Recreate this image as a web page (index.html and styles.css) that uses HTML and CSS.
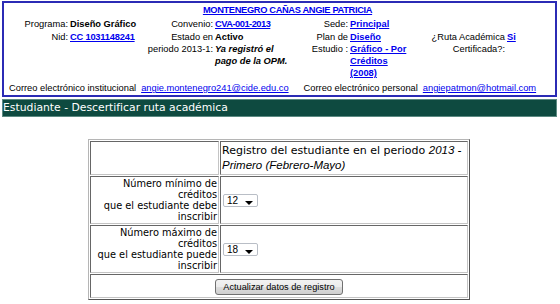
FILE: index.html
```html
<!DOCTYPE html>
<html lang="es">
<head>
<meta charset="utf-8">
<title>Estudiante - Descertificar ruta académica</title>
<link rel="stylesheet" href="styles.css">
</head>
<body>
<div class="page">
  <div class="info">
    <div class="info-grid">
      <div class="name"><a href="#" class="tight">MONTENEGRO CAÑAS ANGIE PATRICIA</a></div>

      <div class="lbl">Programa:</div>
      <div class="val"><b>Diseño Gráfico</b></div>
      <div class="lbl">Convenio:</div>
      <div class="val"><a href="#" class="tighter">CVA-001-2013</a></div>
      <div class="lbl">Sede:</div>
      <div class="val"><a href="#">Principal</a></div>
      <div></div>
      <div></div>

      <div class="lbl">Nid:</div>
      <div class="val"><a href="#" class="tight-s">CC 1031148241</a></div>
      <div class="lbl">Estado en periodo 2013-1:</div>
      <div class="val"><b>Activo</b><br><b><i>Ya registró el pago de la OPM.</i></b></div>
      <div class="lbl">Plan de Estudio :</div>
      <div class="val"><a href="#">Diseño Gráfico - Por Créditos (2008)</a></div>
      <div class="lbl">¿Ruta Académica Certificada?:</div>
      <div class="val"><a href="#">Si</a></div>
    </div>
    <div class="mails">
      <span>Correo electrónico institucional</span>
      <a href="#" class="mail">angie.montenegro241@cide.edu.co</a>
      <span class="mail-lbl2">Correo electrónico personal</span>
      <a href="#" class="mail">angiepatmon@hotmail.com</a>
    </div>
  </div>

  <div class="bar">Estudiante - Descertificar ruta académica</div>

  <table class="reg">
    <tr>
      <td class="c1"></td>
      <td class="c2 head">Registro del estudiante en el periodo <i>2013 -</i> <i>Primero (Febrero-Mayo)</i></td>
    </tr>
    <tr>
      <td class="c1 lab">Número mínimo de créditos<br>que el estudiante debe inscribir</td>
      <td class="c2"><span class="dd"><span class="dd-val">12</span><svg class="dd-arrow" width="8" height="4" viewBox="0 0 8 4"><path d="M0 0H8L4 4Z"/></svg></span></td>
    </tr>
    <tr>
      <td class="c1 lab">Número máximo de créditos<br>que el estudiante puede inscribir</td>
      <td class="c2"><span class="dd"><span class="dd-val">18</span><svg class="dd-arrow" width="8" height="4" viewBox="0 0 8 4"><path d="M0 0H8L4 4Z"/></svg></span></td>
    </tr>
    <tr>
      <td class="act" colspan="2"><button type="button" class="btn">Actualizar datos de registro</button></td>
    </tr>
  </table>
</div>
</body>
</html>
```

FILE: styles.css
```css
body {
  margin: 0;
  background: #fff;
  color: #000;
  font-family: "Liberation Sans", Arial, sans-serif;
  font-size: 9.3px;
}

.page {
  width: 555px;
  margin: 1px 0 0 2px;
}

.info {
  border: 2px solid #2b2bb5;
  padding: 1px 0;
  line-height: 12px;
}

.info-grid {
  display: grid;
  grid-template-columns: 66px 76px 69px 80px 55px 60px 97px 48px;
  row-gap: 1px;
  align-items: start;
}

.info a {
  color: #0000ee;
  font-weight: bold;
}

.name {
  grid-column: 1 / -1;
  text-align: center;
  padding-left: 16px;
  margin-bottom: 1px;
}

.tight { letter-spacing: -0.35px; }
.tighter { letter-spacing: -0.5px; }
.tight-s { letter-spacing: -0.2px; }

.lbl {
  text-align: right;
  padding-right: 2px;
}

.mails {
  display: flex;
  margin-top: 3px;
  padding-left: 5px;
  white-space: nowrap;
}

.info a.mail {
  font-weight: normal;
  margin-left: 5px;
}

.mail-lbl2 {
  margin-left: 15px;
}

.bar {
  margin-top: 2px;
  height: 16px;
  border: 1px solid #5c8a82;
  background: #0e4a40;
  color: #fff;
  font-family: "DejaVu Sans", Verdana, sans-serif;
  font-size: 10.8px;
  line-height: 16px;
  white-space: nowrap;
}

.reg {
  margin: 22px 0 0 86px;
  width: 382px;
  table-layout: fixed;
  border-collapse: separate;
  border-spacing: 1px;
  border: 1px solid;
  border-color: #b5b5b5 #555 #555 #b5b5b5;
}

.reg td {
  box-sizing: border-box;
  border: 1px solid;
  border-color: #666 #c4c4c4 #c4c4c4 #666;
  padding: 1px;
  vertical-align: middle;
}

.reg .c1 { width: 129px; }
.reg .c2 { width: 248px; }

.head {
  font-family: "DejaVu Sans", Verdana, sans-serif;
  font-size: 11px;
  line-height: 15px;
}

.head i {
  font-family: "Liberation Sans", Arial, sans-serif;
  font-size: 11.5px;
  line-height: 15px;
}

.lab {
  text-align: right;
  font-family: "DejaVu Sans", Verdana, sans-serif;
  font-size: 9.8px;
  line-height: 11px;
}

.dd {
  display: inline-flex;
  align-items: center;
  box-sizing: border-box;
  width: 35px;
  height: 13px;
  margin-left: 1px;
  padding-left: 3px;
  border: 1px solid #b9bec6;
  border-radius: 2px;
  background: #fff;
  vertical-align: middle;
  font-family: "Liberation Sans", Arial, sans-serif;
  font-size: 10px;
  line-height: 11px;
}

.dd-val {
  width: 18px;
}

.dd-arrow {
  display: block;
  margin-top: 6px;
  fill: #000;
}

.act {
  text-align: center;
  line-height: 16px;
}

.reg td.act {
  padding: 4px 1px 2px;
}

.btn {
  box-sizing: border-box;
  width: 128px;
  height: 16px;
  padding: 0;
  margin: 0;
  vertical-align: top;
  border: 1px solid #707070;
  border-radius: 3px;
  background: linear-gradient(#f2f2f2 0%, #ebebeb 50%, #dddddd 50%, #cfcfcf 100%);
  color: #000;
  font-family: "Liberation Sans", Arial, sans-serif;
  font-size: 9.2px;
  line-height: 14px;
}
```
